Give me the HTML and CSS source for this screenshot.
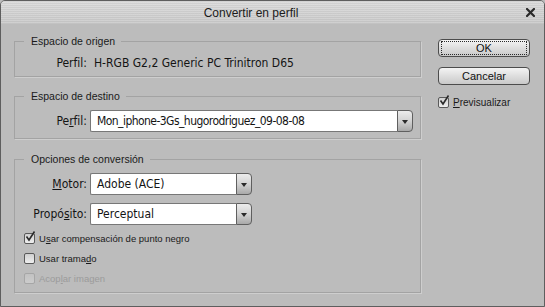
FILE: index.html
```html
<!DOCTYPE html>
<html lang="es">
<head>
    <meta charset="UTF-8">
    <title>Convertir en perfil</title>
    <link rel="stylesheet" href="styles.css">
</head>
<body>
    <div class="window">
        <div class="titlebar">
            <span class="title">Convertir en perfil</span>
            <span class="close">
                <svg width="9" height="9" viewBox="0 0 9 9"><path d="M1 1 L8 8 M8 1 L1 8" stroke="#2a2a2a" stroke-width="2.2" stroke-linecap="square"/></svg>
            </span>
        </div>

        <div class="content">
            <div class="groups">
                <fieldset class="group">
                    <legend>Espacio de origen</legend>
                    <div class="field-row">
                        <span class="label">Perfil:</span>
                        <span class="value">H-RGB G2,2 Generic PC Trinitron D65</span>
                    </div>
                </fieldset>

                <fieldset class="group">
                    <legend>Espacio de destino</legend>
                    <div class="field-row">
                        <span class="label">Pe<u>r</u>fil:</span>
                        <div class="select">
                            <span class="select-field select-field-tight">Mon_iphone-3Gs_hugorodriguez_09-08-08</span>
                            <span class="select-arrow"></span>
                        </div>
                    </div>
                </fieldset>

                <fieldset class="group group-options">
                    <legend>Opciones de conversión</legend>
                    <div class="field-row">
                        <span class="label"><u>M</u>otor:</span>
                        <div class="select select-short">
                            <span class="select-field">Adobe (ACE)</span>
                            <span class="select-arrow"></span>
                        </div>
                    </div>
                    <div class="field-row field-row-next">
                        <span class="label">Propó<u>s</u>ito:</span>
                        <div class="select select-short">
                            <span class="select-field">Perceptual</span>
                            <span class="select-arrow"></span>
                        </div>
                    </div>

                    <div class="checks">
                        <label class="check">
                            <span class="box checked">
                                <svg width="12" height="12" viewBox="0 0 12 12"><path d="M2.5 5.5 L5 9 L10.5 0.5" fill="none" stroke="#2b2b2b" stroke-width="1.6"/></svg>
                            </span>
                            <span>U<u>s</u>ar compensación de punto negro</span>
                        </label>
                        <label class="check">
                            <span class="box"></span>
                            <span>Usar trama<u>d</u>o</span>
                        </label>
                        <label class="check disabled">
                            <span class="box"></span>
                            <span>Acop<u>l</u>ar imagen</span>
                        </label>
                    </div>
                </fieldset>
            </div>

            <div class="actions">
                <button class="btn btn-default"><span>OK</span></button>
                <button class="btn">Cancelar</button>
                <label class="check check-preview">
                    <span class="box checked">
                        <svg width="12" height="12" viewBox="0 0 12 12"><path d="M2.5 5.5 L5 9 L10.5 0.5" fill="none" stroke="#2b2b2b" stroke-width="1.6"/></svg>
                    </span>
                    <span><u>P</u>revisualizar</span>
                </label>
            </div>
        </div>
    </div>
</body>
</html>
```

FILE: styles.css
```css
* {
    box-sizing: border-box;
}

body {
    margin: 0;
    padding: 0;
    font-family: "Liberation Sans", Arial, sans-serif;
    color: #141414;
    background: #bcbcbc;
}

.window {
    width: 545px;
    height: 307px;
    background: #bcbcbc;
    border: 1px solid #5e5e5e;
    border-radius: 5px 5px 0 0;
    overflow: hidden;
}

.titlebar {
    height: 23px;
    display: flex;
    align-items: center;
    background:
        repeating-linear-gradient(0deg, rgba(255, 255, 255, 0.12) 0 1px, rgba(0, 0, 0, 0.03) 1px 2px),
        linear-gradient(#dadada, #c9c9c9);
    border-bottom: 1px solid #c2c2c2;
}

.title {
    flex: 1;
    text-align: center;
    font-size: 12px;
    color: #1b1b1b;
    padding-top: 1px;
}

.close {
    width: 43px;
    display: flex;
    justify-content: flex-end;
    padding-right: 9px;
    padding-top: 1px;
}

.close svg {
    display: block;
}

.content {
    display: flex;
    padding-left: 13px;
}

.groups {
    width: 408px;
    padding-top: 11px;
}

.group {
    width: 407px;
    margin: 0 0 13px 0;
    padding: 7px 7px 5px 9px;
    border: 1px solid #a3a3a3;
    box-shadow: 1px 1px 0 #cecece;
}

.group:nth-child(2) {
    padding-bottom: 6px;
    margin-bottom: 14px;
}

.group legend {
    padding: 0 6px 0 7px;
    font-size: 10.5px;
    line-height: 13px;
    color: #1a1a1a;
}

.field-row {
    display: grid;
    grid-template-columns: 63px 1fr;
    column-gap: 3px;
    align-items: center;
    font-family: "DejaVu Sans Condensed", "DejaVu Sans", sans-serif;
    font-size: 12px;
    line-height: 16px;
}

.field-row-next {
    margin-top: 8px;
}

.label {
    text-align: right;
}

.value {
    padding-left: 4px;
}

.select {
    display: flex;
    height: 22px;
}

.select-short {
    width: 162px;
}

.select-field {
    flex: 1;
    background: #fff;
    border: 1px solid #777;
    border-right: none;
    border-radius: 2px 0 0 2px;
    padding-left: 6px;
    line-height: 20px;
    white-space: nowrap;
    overflow: hidden;
}

.select-field-tight {
    letter-spacing: -0.55px;
}

.select-arrow {
    width: 16px;
    border: 1px solid #5f5f5f;
    border-radius: 0 4px 4px 0;
    background: linear-gradient(#ececec, #d2d2d2 50%, #a9a9a9);
    display: flex;
    align-items: center;
    justify-content: center;
}

.select-arrow::after {
    content: "";
    border-left: 3px solid transparent;
    border-right: 3px solid transparent;
    border-top: 4px solid #2a2a2a;
    margin-top: 1px;
}

.checks {
    margin-top: 3px;
    margin-bottom: -1px;
}

.check {
    display: flex;
    align-items: center;
    height: 20px;
    font-size: 9.5px;
    color: #1a1a1a;
}

.box {
    position: relative;
    width: 11px;
    height: 11px;
    margin-right: 4px;
    border: 1px solid #5a5a5a;
    border-radius: 2px;
    background: linear-gradient(#cfcfcf, #eeeeee);
    flex-shrink: 0;
}

.box svg {
    position: absolute;
    left: -1px;
    top: -3px;
}

.check.disabled {
    color: #9b9b9b;
}

.check.disabled .box {
    border-color: #a6a6a6;
    background: linear-gradient(#c2c2c2, #cccccc);
}

.actions {
    margin-left: 16px;
    padding-top: 15px;
    width: 92px;
}

.btn {
    display: block;
    width: 92px;
    height: 18px;
    margin: 0 0 10px 0;
    padding: 0;
    border: 1px solid #4c4c4c;
    border-radius: 4px;
    background: linear-gradient(#f4f4f4, #e0e0e0 45%, #c9c9c9);
    font-family: "Liberation Sans", Arial, sans-serif;
    font-size: 11px;
    line-height: 15px;
    color: #111;
}

.btn-default span {
    display: block;
    margin: 1px 2px;
    border: 1px dotted #2a2a2a;
    line-height: 12px;
    height: 14px;
}

.check-preview {
    margin-top: 5px;
    height: 15px;
    font-size: 10px;
}
```
